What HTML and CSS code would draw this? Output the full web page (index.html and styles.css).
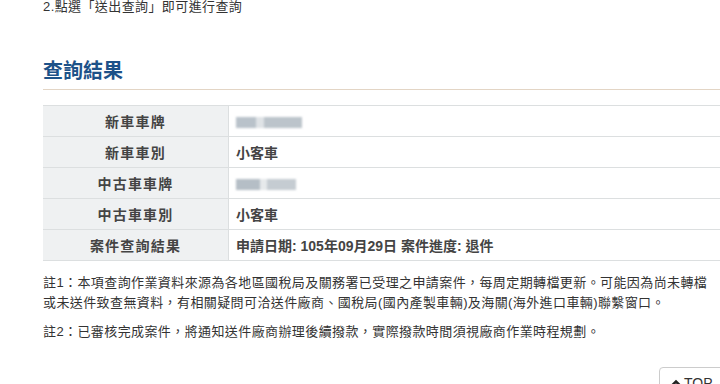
FILE: index.html
```html
<!DOCTYPE html>
<html lang="zh-Hant">
<head>
<meta charset="utf-8">
<link rel="stylesheet" href="styles.css">
</head>
<body>
<div class="page">
  <p class="step">2.點選「送出查詢」即可進行查詢</p>
  <h2 class="title">查詢結果</h2>
  <table class="result">
    <tr><th>新車車牌</th><td><span class="blur blur-a"></span></td></tr>
    <tr><th>新車車別</th><td>小客車</td></tr>
    <tr><th>中古車車牌</th><td><span class="blur blur-b"></span></td></tr>
    <tr><th>中古車車別</th><td>小客車</td></tr>
    <tr><th>案件查詢結果</th><td>申請日期: 105年09月29日 案件進度: 退件</td></tr>
  </table>
  <div class="notes">
    <p>註1：本項查詢作業資料來源為各地區國稅局及關務署已受理之申請案件，每周定期轉檔更新。可能因為尚未轉檔<br>或未送件致查無資料，有相關疑問可洽送件廠商、國稅局(國內產製車輛)及海關(海外進口車輛)聯繫窗口。</p>
    <p>註2：已審核完成案件，將通知送件廠商辦理後續撥款，實際撥款時間須視廠商作業時程規劃。</p>
  </div>
</div>
<a class="top-btn" href="#"><svg class="arrow" width="12" height="8" viewBox="0 0 12 8"><polyline points="1.5,7 6,2.5 10.5,7" fill="none" stroke="#222" stroke-width="2.6"/></svg>TOP</a>
</body>
</html>
```
FILE: styles.css
```css
html, body {
  margin: 0;
  padding: 0;
  background: #fff;
  overflow: hidden;
  width: 720px;
  height: 384px;
}
body {
  font-family: "Liberation Sans", Arial, "Noto Sans CJK TC", sans-serif;
  color: #333;
  position: relative;
}
.page {
  padding-left: 43px;
  width: 760px;
}
.step {
  margin: 0;
  font-size: 13px;
  line-height: 14px;
  letter-spacing: 0.4px;
  color: #333;
}
.title {
  margin: 46px 0 0 0;
  font-size: 20px;
  line-height: 22px;
  font-weight: bold;
  color: #1d5289;
  padding-bottom: 7px;
  border-bottom: 1px solid #e3d5c5;
}
.result {
  margin-top: 15px;
  width: 760px;
  border-collapse: collapse;
  font-size: 14px;
}
.result th, .result td {
  height: 30px;
  padding: 0;
  border-top: 1px solid #dcdfe0;
  border-bottom: 1px solid #dcdfe0;
  color: #444;
  font-weight: bold;
}
.result th {
  width: 185px;
  background: #eff1f2;
  text-align: center;
  letter-spacing: 1.2px;
  border-right: 1px solid #dcdfe0;
}
.result td {
  padding-left: 7px;
  text-align: left;
}
.blur {
  display: inline-block;
  height: 11px;
  vertical-align: middle;
  filter: blur(1.2px);
}
.blur-a {
  width: 66px;
  background: linear-gradient(90deg, #b9c2ca 0 30%, #dfe3e6 30% 42%, #bcc4cb 42% 100%);
}
.blur-b {
  width: 60px;
  background: linear-gradient(90deg, #b5bec6 0 40%, #e6e9eb 40% 52%, #c5ccd2 52% 100%);
}
.notes {
  margin-top: 12px;
  font-size: 13px;
  line-height: 20px;
  letter-spacing: 0.4px;
  color: #333;
}
.notes p {
  margin: 0 0 9px 0;
}
.top-btn {
  position: absolute;
  left: 659px;
  top: 367px;
  width: 70px;
  height: 32px;
  border: 1px solid #ccc;
  border-radius: 4px;
  background: #fff;
  color: #333;
  text-decoration: none;
  font-size: 14px;
  line-height: 30px;
  padding-left: 10px;
  box-sizing: border-box;
}
.arrow {
  margin-right: 2px;
  vertical-align: 1px;
}
```
